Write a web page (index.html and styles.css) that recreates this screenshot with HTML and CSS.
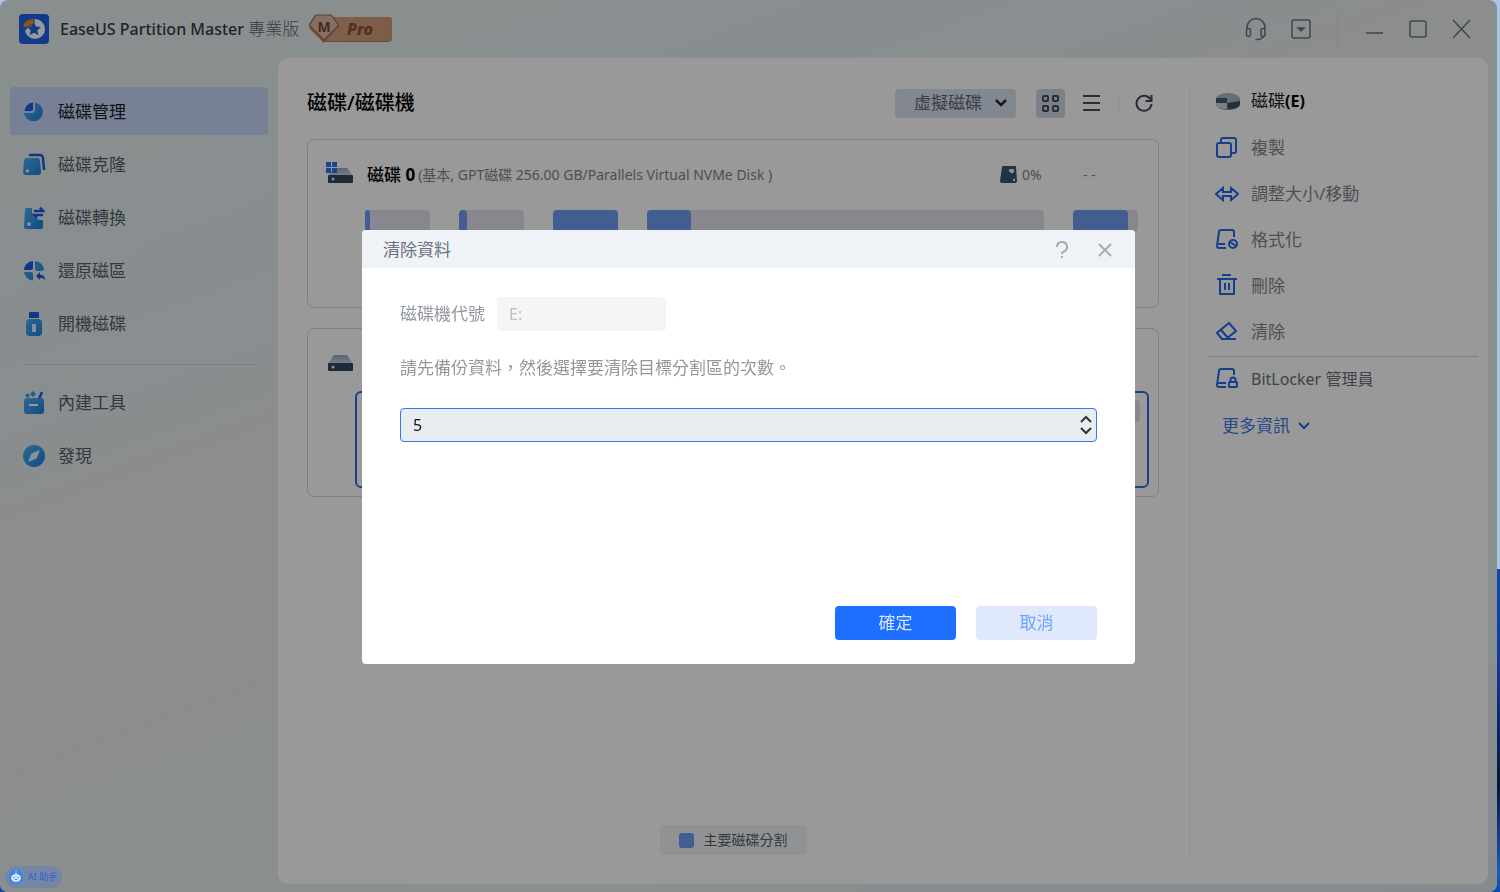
FILE: index.html
```html
<!DOCTYPE html>
<html lang="zh-Hant">
<head>
    <meta charset="UTF-8">
    <meta name="viewport" content="width=device-width, initial-scale=1">
    <title>EaseUS Partition Master 專業版</title>
    <link rel="stylesheet" href="styles.css">
</head>
<body>

    <!-- 共用漸層 -->
    <svg class="defs" width="0" height="0" aria-hidden="true">
        <defs>
            <linearGradient id="blue" x1="0" y1="0" x2="1" y2="1">
                <stop offset="0" stop-color="#4db0f2"/>
                <stop offset="1" stop-color="#1c7fdc"/>
            </linearGradient>
            <linearGradient id="bronze" x1="0" y1="0" x2="1" y2="0">
                <stop offset="0" stop-color="#d3a184"/>
                <stop offset="1" stop-color="#cf9a72"/>
            </linearGradient>
            <linearGradient id="diskTop" x1="0" y1="0" x2="0" y2="1">
                <stop offset="0" stop-color="#93a5c4"/>
                <stop offset="1" stop-color="#cdd8e8"/>
            </linearGradient>
        </defs>
    </svg>

    <div class="window">
        <header class="titlebar">
            <svg class="logo" width="30" height="30" viewBox="0 0 30 30">
                <rect width="30" height="30" rx="4" fill="#1f62e8"/>
                <circle cx="16" cy="15" r="10" fill="#fff"/>
                <path d="M3 15a12 12 0 0 1 12-10l1 1-2 6-5 1-2 3z" fill="#1f62e8"/>
                <path d="M4 13a10 10 0 0 1 11-8l-1 5-4 2-3 1z" fill="#f08a1c"/>
                <path d="M15 8l2 4.500 5 .5-3.700 3.300 1.200 5-4.500-2.600-4.400 2.600 1.100-5L8 13l5-.5z" fill="#1f62e8"/>
            </svg>
            <h1 class="app-name">EaseUS Partition Master <span>專業版</span></h1>
            <svg class="badge" width="84" height="30" viewBox="0 0 84 30">
                <path d="M14 3h67a3 3 0 0 1 3 3v19a3 3 0 0 1-3 3H14z" fill="url(#bronze)"/>
                <path d="M16 27.500h64" stroke="#b97a50" stroke-width="1"/>
                <path d="M9 3h15l7 9-15 17L1 14z" fill="#b98262"/>
                <path d="M9 1h13q1 0 2 1l6 8q1 1 0 2L16 26 2 12q-1-1 0-2l5-8q1-1 2-1z" fill="#dcbba6" stroke="#9c694c" stroke-width="1.200"/>
                <text x="16" y="18" class="badge-m">M</text>
                <text x="52" y="21" class="badge-pro">Pro</text>
            </svg>
            <div class="window-tools">
                <button type="button" aria-label="客服">
                    <svg width="22" height="24" viewBox="0 0 22 24" class="thin">
                        <path d="M2 12v-1.500a9 9 0 0 1 18 0V12"/>
                        <rect x="1.500" y="11.500" width="4" height="8" rx="2"/>
                        <rect x="16" y="11.500" width="4" height="8" rx="2"/>
                        <path d="M18.500 19c-1 2.500-4 4-8 3.500"/>
                    </svg>
                </button>
                <button type="button" aria-label="選單">
                    <svg width="20" height="20" viewBox="0 0 20 20" class="thin">
                        <rect x="1" y="1" width="18" height="18" rx="2"/>
                        <path d="M7 9l3 3 3-3z" fill="#6a7582"/>
                    </svg>
                </button>
                <span class="tool-sep"></span>
                <button type="button" aria-label="最小化">
                    <svg width="20" height="20" viewBox="0 0 20 20" class="thin"><path d="M2 14h17"/></svg>
                </button>
                <button type="button" aria-label="最大化">
                    <svg width="20" height="20" viewBox="0 0 20 20" class="thin"><rect x="2" y="2" width="16" height="16" rx="2"/></svg>
                </button>
                <button type="button" aria-label="關閉視窗">
                    <svg width="20" height="20" viewBox="0 0 20 20" class="thin"><path d="M1 1l17 18M18 1L1 19"/></svg>
                </button>
            </div>
        </header>

        <div class="workspace">
            <nav class="sidebar">
                <a href="#" class="nav-item active">
                    <svg width="24" height="24" viewBox="0 0 24 24">
                        <path d="M13 2.500A9.500 9.500 0 1 1 2 13h8a3 3 0 0 0 3-3z" fill="url(#blue)"/>
                        <path d="M11 2.500V9a2 2 0 0 1-2 2H2.500A9.500 9.500 0 0 1 11 2.500z" fill="#1a5ce0"/>
                    </svg>
                    磁碟管理
                </a>
                <a href="#" class="nav-item">
                    <svg width="24" height="24" viewBox="0 0 24 24">
                        <path d="M7 2h11a3 3 0 0 1 3 3l1 12" fill="none" stroke="#1a5ce0" stroke-width="2.500"/>
                        <path d="M5 5h10a3 3 0 0 1 3 3l1 11a3 3 0 0 1-3 3H4a3 3 0 0 1-3-3L2 8a3 3 0 0 1 3-3z" fill="url(#blue)"/>
                        <circle cx="5.500" cy="18" r="1.800" fill="#dff0ff"/>
                    </svg>
                    磁碟克隆
                </a>
                <a href="#" class="nav-item">
                    <svg width="24" height="24" viewBox="0 0 24 24">
                        <path d="M4 2h6v3c0 7 4 9 11 9v7a2 2 0 0 1-2 2H4a2 2 0 0 1-2-2L3 3z" fill="url(#blue)"/>
                        <path d="M12 5h9l-3-3.500M21 9h-9l3 3.500" fill="none" stroke="#1a5ce0" stroke-width="2.500"/>
                        <circle cx="7" cy="18" r="2" fill="#dff0ff"/>
                    </svg>
                    磁碟轉換
                </a>
                <a href="#" class="nav-item">
                    <svg width="24" height="24" viewBox="0 0 24 24">
                        <path d="M11 2v7a2 2 0 0 1-2 2H2a9.500 9.500 0 0 1 9-9z" fill="#1a5ce0"/>
                        <path d="M13 2a9.500 9.500 0 0 1 9 9l-4 1h-3a2 2 0 0 1-2-2zM2 13h7a2 2 0 0 1 2 2v6.500A9.500 9.500 0 0 1 2 13z" fill="url(#blue)"/>
                        <path d="M14 17l4-4v2.500c3 0 5 2 5.500 6-1.500-2-3-2.500-5.500-2.500v2z" fill="#1a5ce0"/>
                    </svg>
                    還原磁區
                </a>
                <a href="#" class="nav-item">
                    <svg width="24" height="24" viewBox="0 0 24 24">
                        <path d="M8 0h8a1 1 0 0 1 1 1v5H7V1a1 1 0 0 1 1-1z" fill="#1a5ce0"/>
                        <rect x="4" y="7" width="16" height="17" rx="4" fill="url(#blue)"/>
                        <rect x="10" y="12" width="4" height="8" rx="1" fill="#dff0ff"/>
                    </svg>
                    開機磁碟
                </a>
                <hr>
                <a href="#" class="nav-item">
                    <svg width="24" height="24" viewBox="0 0 24 24">
                        <circle cx="5.500" cy="4.500" r="2" fill="#38a0ec"/>
                        <path d="M11 0l3 3-3 3-3-3z" fill="#38a0ec"/>
                        <path d="M20 1l-3 7" stroke="#1a5ce0" stroke-width="2.500"/>
                        <rect x="2" y="7" width="20" height="16" rx="3" fill="url(#blue)"/>
                        <path d="M7 14h9" stroke="#fff" stroke-width="2"/>
                    </svg>
                    內建工具
                </a>
                <a href="#" class="nav-item">
                    <svg width="24" height="24" viewBox="0 0 24 24">
                        <circle cx="12" cy="12" r="11" fill="url(#blue)"/>
                        <path d="M18 6l-3.500 8.500L6 18l3.500-8.500z" fill="#e4f4ff"/>
                    </svg>
                    發現
                </a>
            </nav>

            <div class="panel">
                <main class="disks">
                    <div class="disks-head">
                        <h2>磁碟/磁碟機</h2>
                        <label class="picker">
                            <select aria-label="磁碟類型">
                                <option>虛擬磁碟</option>
                            </select>
                            <svg width="14" height="10" viewBox="0 0 14 10"><path d="M2 2l5 5 5-5"/></svg>
                        </label>
                        <button type="button" class="view active" aria-label="格狀檢視">
                            <svg width="19" height="19" viewBox="0 0 19 19">
                                <rect x="2" y="2" width="5" height="5" rx="1"/>
                                <rect x="12" y="2" width="5" height="5" rx="1"/>
                                <rect x="2" y="12" width="5" height="5" rx="1"/>
                                <rect x="12" y="12" width="5" height="5" rx="1"/>
                            </svg>
                        </button>
                        <button type="button" class="view" aria-label="清單檢視">
                            <svg width="19" height="19" viewBox="0 0 19 19"><path d="M1 2h17M1 9h17M1 16h17"/></svg>
                        </button>
                        <span class="view-sep"></span>
                        <button type="button" class="view" aria-label="重新整理">
                            <svg width="19" height="19" viewBox="0 0 19 19"><path d="M15.500 5.500A7.500 7.500 0 1 0 16.500 10M16.500 1v6h-6"/></svg>
                        </button>
                    </div>

                    <section class="card">
                        <div class="card-head">
                            <svg width="30" height="26" viewBox="0 0 30 26">
                                <path d="M9 6h13l6 8H3z" fill="url(#diskTop)"/>
                                <rect x="3" y="13" width="25" height="8" rx="1" fill="#33485a"/>
                                <circle cx="8" cy="17" r="1.500" fill="#d7f0ff"/>
                                <path d="M1 0h5v5H1zM7 0h5v5H7zM1 6h5v5H1zM7 6h5v5H7z" fill="#2a76ee"/>
                            </svg>
                            <h3>磁碟 <b>0</b></h3>
                            <span class="info">(基本, GPT磁碟 256.00 GB/Parallels Virtual NVMe Disk )</span>
                            <span class="usage">
                                <svg width="18" height="18" viewBox="0 0 18 18">
                                    <path d="M3 0h12a1 1 0 0 1 1 1l1 14a2 2 0 0 1-2 2H2a2 2 0 0 1-2-2L2 1a1 1 0 0 1 1-1z" fill="#3a566b"/>
                                    <path d="M9 4q0-1 1-1h3q1 0 1 1v2l-2 1.500-3-2z" fill="#e9eef2"/>
                                    <circle cx="14" cy="14" r="1.200" fill="#e9eef2"/>
                                </svg>
                                0%
                            </span>
                            <span class="temp">- -</span>
                        </div>
                        <div class="bars">
                            <div class="bar"><span style="width: 8%"></span></div>
                            <div class="bar"><span style="width: 13%"></span></div>
                            <div class="bar"><span style="width: 100%"></span></div>
                            <div class="bar wide"><span style="width: 11%"></span></div>
                            <div class="bar"><span style="width: 84%"></span></div>
                        </div>
                    </section>

                    <section class="card">
                        <div class="card-head">
                            <svg width="30" height="26" viewBox="0 0 30 26">
                                <path d="M9 4h13l6 9H3z" fill="url(#diskTop)"/>
                                <rect x="3" y="12" width="25" height="8" rx="1" fill="#33485a"/>
                                <circle cx="8" cy="16" r="1.500" fill="#d7f0ff"/>
                            </svg>
                        </div>
                        <div class="selected">
                            <div class="bar"><span style="width: 11%"></span></div>
                        </div>
                    </section>

                    <div class="legend"><i></i>主要磁碟分割</div>
                </main>

                <aside class="actions">
                    <h3>
                        <svg width="26" height="20" viewBox="0 0 26 20">
                            <path d="M1 8v5c0 3 5 6 12 6s12-3 12-6V8z" fill="#6e8293"/>
                            <ellipse cx="13" cy="8" rx="12" ry="6" fill="#a9b7c6"/>
                            <path d="M1 7h11v5H1z" fill="#46596c"/>
                            <path d="M1 12h11v6C6 18 1 16 1 13z" fill="#ccd6e0"/>
                            <path d="M12 12l13-2v3c0 3-5 5-12 5z" fill="#3d5062"/>
                        </svg>
                        <span>磁碟<b>(E)</b></span>
                    </h3>
                    <button type="button">
                        <svg width="24" height="24" viewBox="0 0 24 24">
                            <rect x="2" y="7" width="14" height="14" rx="2"/>
                            <path d="M6 7V4a2 2 0 0 1 2-2h11a2 2 0 0 1 2 2v11a2 2 0 0 1-2 2h-3"/>
                        </svg>
                        複製
                    </button>
                    <button type="button">
                        <svg width="24" height="24" viewBox="0 0 24 24"><path d="M8 6v4h8V6l7 6-7 6v-4H8v4l-7-6z"/></svg>
                        調整大小/移動
                    </button>
                    <button type="button">
                        <svg width="24" height="24" viewBox="0 0 24 24">
                            <path d="M19 9V4a2 2 0 0 0-2-2H6a2 2 0 0 0-2 2L2 18a2 2 0 0 0 2 2h7M3 16h7"/>
                            <circle cx="18" cy="16" r="4"/>
                            <path d="M15 14l6 4"/>
                        </svg>
                        格式化
                    </button>
                    <button type="button">
                        <svg width="24" height="24" viewBox="0 0 24 24"><path d="M7 1h9M2 5h20M5 5v15h14V5M10 9v7M14 9v7"/></svg>
                        刪除
                    </button>
                    <button type="button">
                        <svg width="24" height="24" viewBox="0 0 24 24"><path d="M7 19l-5-6L14 3l7 8-10 8H7zM6 10l7 8M8 19h13"/></svg>
                        清除
                    </button>
                    <hr>
                    <button type="button" class="dark">
                        <svg width="24" height="24" viewBox="0 0 24 24">
                            <path d="M19 8V4a2 2 0 0 0-2-2H6a2 2 0 0 0-2 2L2 18a2 2 0 0 0 2 2h7M3 16h8"/>
                            <rect x="14" y="15" width="8" height="5" rx="1"/>
                            <path d="M15.500 15v-2a2.500 2.500 0 0 1 5 0v2"/>
                        </svg>
                        BitLocker 管理員
                    </button>
                    <a href="#" class="more">
                        更多資訊
                        <svg width="14" height="10" viewBox="0 0 14 10"><path d="M2 2l5 5 5-5"/></svg>
                    </a>
                </aside>
            </div>
        </div>

        <div class="overlay">
            <form class="dialog" role="dialog" aria-labelledby="dialogTitle">
                <div class="dialog-head">
                    <h2 id="dialogTitle">清除資料</h2>
                    <button type="button" aria-label="說明">
                        <svg width="16" height="18" viewBox="0 0 16 18"><path d="M3 6a5 5 0 1 1 7 4.500C8.500 11 8 11.500 8 13M8 15v2"/></svg>
                    </button>
                    <button type="button" aria-label="關閉">
                        <svg width="16" height="18" viewBox="0 0 16 18"><path d="M2 3l12 12M14 3L2 15"/></svg>
                    </button>
                </div>
                <div class="dialog-body">
                    <div class="field">
                        <label for="drive">磁碟機代號</label>
                        <input type="text" id="drive" value="E:" disabled>
                    </div>
                    <label class="hint" for="times">請先備份資料，然後選擇要清除目標分割區的次數。</label>
                    <div class="spinbox">
                        <input type="number" id="times" value="5" min="1">
                        <div class="steps">
                            <button type="button" aria-label="增加"><svg width="14" height="8" viewBox="0 0 14 8"><path d="M2 7l5-5 5 5"/></svg></button>
                            <button type="button" aria-label="減少"><svg width="14" height="8" viewBox="0 0 14 8"><path d="M2 1l5 5 5-5"/></svg></button>
                        </div>
                    </div>
                </div>
                <div class="dialog-foot">
                    <button type="submit" class="ok">確定</button>
                    <button type="button" class="cancel">取消</button>
                </div>
            </form>
        </div>

        <button type="button" class="assistant">
            <svg width="14" height="14" viewBox="0 0 14 14">
                <circle cx="7" cy="7" r="7" fill="#3285ee"/>
                <path d="M7 1v3" stroke="#cfe4ff"/>
                <ellipse cx="7" cy="8" rx="5" ry="4" fill="#cfe4ff"/>
                <path d="M4.500 7.500h1M8.500 7.500h1M6 9.500h2" stroke="#2a60b8"/>
            </svg>
            AI 助手
        </button>
    </div>

</body>
</html>
```
FILE: styles.css
```css
* { box-sizing: border-box; }
body {
    margin: 0;
    font: 17px/24px "Noto Sans", "Noto Sans CJK TC", sans-serif;
    color: #565e68;
    background: linear-gradient(#a6c8e8 0 569px, #0b4bab 569px, #0d3b98 74%, #05123f 88%, #1c5eb8 98%, #0b4bab);
}
h1, h2, h3 { margin: 0; font-size: 17px; font-weight: 400; }
button { font: inherit; color: inherit; padding: 0; border: none; background: none; }
a { color: inherit; text-decoration: none; }
hr { border: none; margin: 0; }
svg { flex: none; }
.defs { position: absolute; }

.window {
    display: flex;
    flex-direction: column;
    min-height: 100vh;
    margin-right: 3px;
    border-radius: 8px;
    background: linear-gradient(160deg, #e5eeee 0%, #e3edf0 25%, #ebebea 42%, #e7edec 60%, #e5eeee 80%, #e2e6f0 100%);
}

/* 標題列 */
.titlebar { display: flex; align-items: center; height: 58px; padding: 0 25px 0 19px; }
.app-name { margin: 0 9px 0 11px; font-size: 16px; font-weight: 500; color: #333c48; }
.app-name span { font-size: 17px; font-weight: 300; color: #59636f; }
.badge-m { font: 700 14px "Noto Sans", sans-serif; fill: #75492f; text-anchor: middle; }
.badge-pro { font: italic 800 16px "Noto Sans", sans-serif; fill: #875131; text-anchor: middle; }
.window-tools { display: flex; align-items: center; gap: 24px; margin-left: auto; }
.window-tools button { display: flex; }
.tool-sep { width: 1px; height: 32px; margin: 0 2px; background: #d8e2e5; }
.thin { fill: none; stroke: #6a7582; stroke-width: 1.5; }

.workspace { display: flex; flex: 1; padding: 0 9px 8px 0; }

/* 側邊選單 */
.sidebar { display: flex; flex-direction: column; gap: 5px; width: 278px; padding: 29px 10px; }
.nav-item { display: flex; align-items: center; gap: 12px; height: 48px; padding: 1px 12px 0; border-radius: 4px; }
.nav-item.active { background: #c6d6f9; color: #1c2026; }
.sidebar hr { height: 1px; margin: 12px 12px 8px 14px; background: #c9d2df; }

.panel { display: flex; flex: 1; padding: 29px 0 26px; border-radius: 10px; background: #fff; }

/* 磁碟清單 */
.disks { display: flex; flex-direction: column; flex: 1; gap: 20px; padding: 0 30px 3px 29px; }
.disks-head { display: flex; align-items: center; height: 32px; }
.disks-head h2 { font-size: 20px; font-weight: 500; color: #000; flex: 1; }
.picker { display: grid; align-items: center; width: 121px; height: 29px; margin-right: 20px; border-radius: 4px; background: #dbe2ef; }
.picker select { grid-area: 1 / 1; height: 29px; padding: 0 19px; border: none; background: none; appearance: none; font: inherit; color: #5a6778; }
.picker svg { grid-area: 1 / 1; justify-self: end; margin-right: 8px; fill: none; stroke: #222a36; stroke-width: 2.5; pointer-events: none; }
.view { display: grid; place-items: center; width: 29px; height: 29px; margin-right: 12px; border-radius: 4px; }
.view.active { background: #cfd7e5; }
.view svg { fill: none; stroke: #444b57; stroke-width: 2; }
.view:last-child { margin: 0; }
.view-sep { width: 1px; height: 20px; margin-right: 11px; background: #e8ecf2; }

.card { height: 169px; border: 1px solid #d3d8db; border-radius: 7px; }
.card-head { display: flex; align-items: center; height: 70px; padding: 0 1px 1px 17px; }
.card-head h3 { margin: 0 3px 0 12px; font-weight: 500; color: #000; }
.info, .usage, .temp { font-size: 14px; color: #7e858d; }
.info { flex: 1; }
.usage { display: flex; align-items: center; gap: 4px; width: 83px; }
.temp { width: 74px; }
.bars { display: flex; gap: 29px; padding: 0 20px 0 57px; }
.bar { width: 65px; height: 22px; border-radius: 4px; background: #dfe1ef; }
.bar span { display: block; height: 100%; border-radius: 4px; background: #6f9bef; }
.bar.wide { flex: 1; }
.selected { height: 97px; margin: -8px 9px 0 47px; padding: 7px; border: 2px solid #2c6fe8; border-radius: 6px; }
.selected .bar { width: 100%; }

.legend { display: flex; align-items: center; align-self: center; gap: 10px; height: 30px; margin-top: auto; padding: 0 19px; border-radius: 4px; background: #f1f4f6; font-size: 14px; }
.legend i { width: 15px; height: 15px; border-radius: 3px; background: #6f9bef; }

/* 右側操作 */
.actions { display: flex; flex-direction: column; width: 299px; padding: 0 10px 0 18px; border-left: 1px solid #eef1f5; color: #80878f; }
.actions h3, .actions button { display: flex; align-items: center; gap: 12px; height: 46px; padding: 0 7px; }
.actions h3 { gap: 10px; height: 28px; margin-bottom: 10px; color: #222; }
.actions h3 b { color: #000; font-size: 16px; }
.actions button svg, .more svg { fill: none; stroke: #2469e8; stroke-width: 2; }
.actions hr { height: 1px; margin: 1px 0 -1px; background: #ccd3d6; }
.actions .dark { color: #69717b; font-size: 16px; }
.actions .more { display: flex; align-items: center; gap: 7px; height: 48px; padding: 0 14px; color: #4278e6; }

/* 清除資料對話框 */
.overlay { position: fixed; inset: 0 3px 0 0; display: flex; align-items: center; justify-content: center; padding-top: 2px; border-radius: 8px; background: rgba(0, 0, 0, .4); }
.dialog { display: flex; flex-direction: column; width: 773px; min-height: 434px; border-radius: 4px; background: #fff; overflow: hidden; }
.dialog-head { display: flex; align-items: center; gap: 27px; height: 38px; padding: 2px 22px 0 21px; background: #eff3f7; }
.dialog-head h2 { flex: 1; color: #6a727c; }
.dialog-head button { display: flex; }
.dialog-head svg { fill: none; stroke: #a6acb5; stroke-width: 2; }
.dialog-body { flex: 1; padding: 29px 38px; color: #92979e; }
.field { display: flex; align-items: center; gap: 12px; }
.field input { width: 169px; height: 34px; padding: 0 12px; border: none; border-radius: 4px; background: #f5f5f6; font: inherit; font-size: 16px; color: #bcbfc4; }
.hint { display: block; margin: 25px 0 28px; }
.spinbox { display: flex; height: 34px; border: 1px solid #3479f0; border-radius: 4px; background: #e9ecf1; overflow: hidden; }
.spinbox input { flex: 1; padding: 0 12px; border: none; background: none; outline: none; appearance: textfield; font: inherit; font-size: 16px; color: #111; }
.steps { display: flex; flex-direction: column; justify-content: center; gap: 4px; padding-right: 3px; }
.steps button { display: flex; }
.steps svg { fill: none; stroke: #333; stroke-width: 2; }
.dialog-foot { display: flex; justify-content: flex-end; gap: 20px; padding: 0 38px 24px; }
.dialog-foot button { width: 121px; height: 34px; border-radius: 4px; }
.dialog-foot .ok { background: #1f6fff; color: #d7e6ff; }
.dialog-foot .cancel { background: #e0e9fb; color: #6ea3ff; }

.assistant { position: fixed; left: 5px; bottom: 4px; display: flex; align-items: center; gap: 5px; height: 22px; padding: 0 5px 0 4px; border-radius: 11px; background: #7485a6; font-size: 9px; color: #2b63d4; }
```
